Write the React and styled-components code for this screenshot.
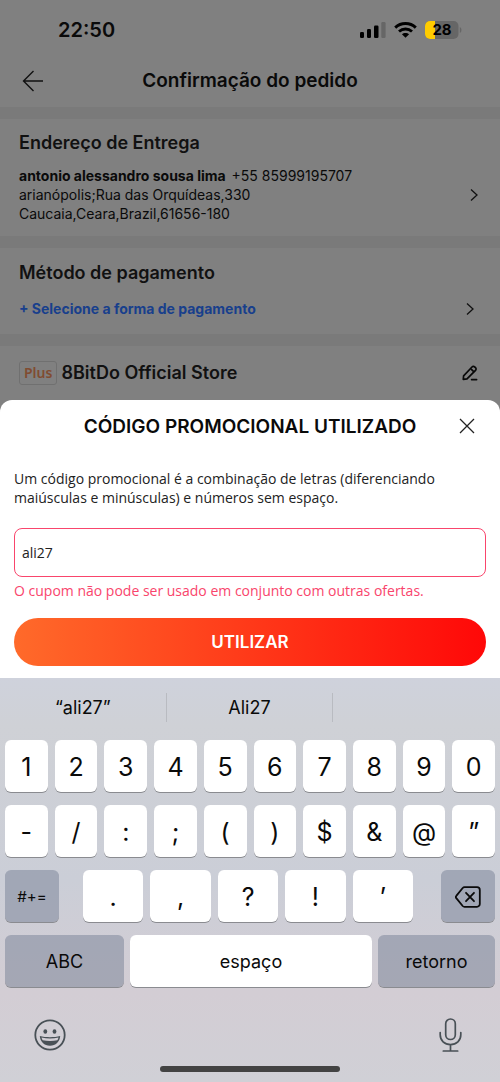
import React, { useState } from "react";
import styled, { createGlobalStyle } from "styled-components";

const GlobalStyle = createGlobalStyle`
    * {
        box-sizing: border-box;
    }
    body {
        margin: 0;
        background-color: #d0d0d6;
        font-family: Inter, "Liberation Sans", sans-serif;
        color: #0a0a0a;
    }
    button, input {
        font-family: inherit;
        color: inherit;
    }
    h1, h2, p {
        margin: 0;
    }
`
const Screen = styled.div`
    display: flex;
    flex-direction: column;
    min-height: 100vh;
`
const Page = styled.main`
    background-color: #7a7a7a;
    display: flex;
    flex-direction: column;
    gap: 12px;
`
const Header = styled.header`
    background-color: #808080;
    padding-bottom: 6px;
`
const StatusBar = styled.div`
    display: flex;
    align-items: center;
    justify-content: space-between;
    height: 60px;
    padding: 0 38px 0 58px;
`
const Time = styled.span`
    font-size: 20px;
    font-weight: 600;
`
const StatusIcons = styled.div`
    display: flex;
    align-items: center;
    gap: 8px;
`
const TitleBar = styled.div`
    display: grid;
    grid-template-columns: 24px 1fr 24px;
    align-items: center;
    height: 41px;
    padding: 0 21px;
`
const PageTitle = styled.h1`
    text-align: center;
    font-size: 19px;
    font-weight: 600;
`
const IconButton = styled.button`
    display: flex;
    align-items: center;
    justify-content: center;
    padding: 0;
    border: none;
    background: none;
`
const Section = styled.section`
    background-color: #808080;
    padding: ${props => props.$padding};
`
const SectionTitle = styled.h2`
    font-size: 18px;
    line-height: 24px;
    font-weight: 600;
    color: #111;
`
const RowButton = styled.button`
    display: flex;
    align-items: center;
    justify-content: space-between;
    width: 100%;
    padding: 0;
    border: none;
    background: none;
    text-align: left;
    font-size: 14px;
    line-height: 19px;
    margin-top: ${props => props.$top};
`
const PayText = styled.span`
    font-weight: 700;
    color: #183f8c;
`
const Name = styled.b`
    margin-right: 2px;
`
const StoreRow = styled.div`
    display: flex;
    align-items: center;
    gap: 4px;

    button {
        margin-left: auto;
    }
`
const PlusTag = styled.span`
    height: 24px;
    padding: 0 4px;
    border: 1px solid #707070;
    border-radius: 3px;
    font-family: "Noto Sans", sans-serif;
    font-size: 14px;
    line-height: 22px;
    font-weight: 600;
    color: #804c31;
`
const SheetWrap = styled.div`
    background-color: #808080;
`
const Sheet = styled.form`
    background-color: #fff;
    border-radius: 12px 12px 0 0;
    padding: 12px 14px;
`
const SheetHeader = styled.div`
    display: grid;
    grid-template-columns: 38px 1fr 38px;
    align-items: center;
    height: 28px;
`
const SheetTitle = styled.h2`
    text-align: center;
    font-size: 19px;
    font-weight: 600;
    white-space: nowrap;
`
const Help = styled.p`
    margin-top: 29px;
    font-family: "Open Sans", sans-serif;
    font-size: 14px;
    line-height: 19px;
    color: #222;
`
const CodeInput = styled.input`
    display: block;
    width: 100%;
    height: 49px;
    margin-top: 21px;
    padding: 0 7px;
    border: 1px solid #f9456c;
    border-radius: 8px;
    outline: none;
    background-color: #fff;
    font-family: "Open Sans", sans-serif;
    font-size: 14px;
    color: #222;
`
const ErrorText = styled.p`
    margin-top: 4px;
    font-family: "Open Sans", sans-serif;
    font-size: 14px;
    line-height: 20px;
    color: #f9456c;
`
const SubmitButton = styled.button`
    display: block;
    width: 100%;
    height: 48px;
    margin-top: 17px;
    border: none;
    border-radius: 24px;
    background-image: linear-gradient(to right, #ff6a2a, #ff0808);
    font-size: 17px;
    font-weight: 600;
    color: #fff;
`
const Keyboard = styled.div`
    flex: 1;
    background-image: linear-gradient(#cfd2dc, #cfd1d6 12%, #cbced7 50%, #d3cdd4 78%, #d0d0d6);
`
const Suggestions = styled.div`
    display: grid;
    grid-template-columns: repeat(3, 1fr);
    padding: 15px 0 18px;
`
const Suggestion = styled.button`
    height: 29px;
    padding: 0;
    border: none;
    border-right: ${props => props.$last ? "none" : "1px solid #b9bbc1"};
    background: none;
    font-size: 18px;
`
const Keys = styled.div`
    display: flex;
    flex-direction: column;
    gap: 13px;
    padding: 0 5px;
`
const KeyRow = styled.div`
    display: flex;
    gap: ${props => props.$gap || "7px"};
    flex: 1;
    margin: ${props => props.$margin || "0"};
`
const SplitRow = styled.div`
    display: flex;
`
const Key = styled.button`
    display: flex;
    align-items: center;
    justify-content: center;
    flex: ${props => props.$flex || "1 1 0"};
    min-width: 0;
    height: 52px;
    padding: 1px 0 0;
    border: none;
    border-radius: 6px;
    box-shadow: 0 1px 0 #8a8b90;
    background-color: ${props => props.$dark ? "rgba(115, 125, 147, 0.48)" : "#fff"};
    font-size: ${props => props.$size || "25px"};
`
const BottomBar = styled.div`
    display: flex;
    align-items: center;
    justify-content: space-between;
    padding: 31px 33px 0;
`
const HomeIndicator = styled.div`
    width: 36%;
    height: 6px;
    margin: 14px auto 9px;
    border-radius: 3px;
    background-color: #434343;
`

const SignalIcon = () => (
    <svg width="26" height="16" viewBox="0 0 26 16">
        <rect x="0" y="10" width="4" height="6" rx="1.2" fill="#000" />
        <rect x="7" y="7" width="4" height="9" rx="1.2" fill="#000" />
        <rect x="14" y="3.5" width="4.5" height="12.5" rx="1.2" fill="#000" />
        <rect x="21.3" y="0" width="4.3" height="16" rx="1.2" fill="#666" />
    </svg>
)

const WifiIcon = () => (
    <svg width="23" height="16" viewBox="0 0 23 16" fill="none" stroke="#000" strokeWidth="2.9">
        <path d="M1.2 5.6C7 .2 16 .2 21.8 5.6" />
        <path d="M5 9.5c3.8-3.4 9.2-3.4 13 0" />
        <path d="M11.5 15.8 7.9 12.3c2-1.8 5.2-1.8 7.2 0z" fill="#000" stroke="none" />
    </svg>
)

const BatteryIcon = () => (
    <svg width="37" height="18" viewBox="0 0 37 18">
        <rect width="33.5" height="18" rx="5" fill="#666" />
        <path d="M5 0h5v18H5a5 5 0 0 1-5-5V5a5 5 0 0 1 5-5z" fill="#fc0" />
        <path d="M34.8 6c2.2 1 2.2 5 0 6z" fill="#666" />
        <text x="17" y="14.2" textAnchor="middle" fontSize="15" fontWeight="700" fill="#000">28</text>
    </svg>
)

const BackIcon = () => (
    <svg width="22" height="22" viewBox="0 0 22 22" fill="none" stroke="#111" strokeWidth="1.4">
        <path d="M11.5 1 1.5 11l10 10M1.5 11H21" />
    </svg>
)

const ChevronIcon = () => (
    <svg width="10" height="14" viewBox="0 0 10 14" fill="none" stroke="#111" strokeWidth="1.3">
        <path d="m2 1.5 6 5.5-6 5.5" />
    </svg>
)

const PencilIcon = () => (
    <svg width="16" height="16" viewBox="0 0 16 16" fill="none" stroke="#080808" strokeWidth="1.7" strokeLinejoin="round" strokeLinecap="round">
        <path d="M1.3 14.3 1.6 10.8 10 2a1.9 1.9 0 0 1 2.7 0l.8.7a1.9 1.9 0 0 1 0 2.7L5 13.8z" />
        <path d="m9.4 4.3 1.8 1.8M9.6 14.6H14.6" />
    </svg>
)

const CloseIcon = () => (
    <svg width="16" height="16" viewBox="0 0 16 16" fill="none" stroke="#222" strokeWidth="1.3">
        <path d="m1 1 14 14M15 1 1 15" />
    </svg>
)

const DeleteIcon = () => (
    <svg width="26" height="22" viewBox="0 0 26 22" fill="none" stroke="#0a0a0a" strokeWidth="1.8" strokeLinecap="round" strokeLinejoin="round">
        <path d="M9.5 1.2H22a2.8 2.8 0 0 1 2.8 2.8v14a2.8 2.8 0 0 1-2.8 2.8H9.5a2.5 2.5 0 0 1-1.8-.8L1.5 12.4a2 2 0 0 1 0-2.8L7.7 2a2.5 2.5 0 0 1 1.8-.8z" />
        <path d="m11 6.8 8 8.4M19 6.8l-8 8.4" />
    </svg>
)

const EmojiIcon = () => (
    <svg width="34" height="34" viewBox="0 0 34 34">
        <circle cx="17" cy="17" r="14.7" fill="none" stroke="#485056" strokeWidth="1.8" />
        <ellipse cx="12.3" cy="13.5" rx="1.9" ry="2.2" fill="#485056" />
        <ellipse cx="21.5" cy="13.5" rx="1.9" ry="2.2" fill="#485056" />
        <path d="M6.8 18c6 1.6 14.4 1.6 20.4 0-.4 5.8-4.5 9.7-10.2 9.7S7.2 23.800 6.800 18z" fill="#485056" />
        <path d="M8.500 19.500c5.300 1.200 11.700 1.200 17 0-.2 1.100-.6 2-1.200 2.700-4.600 1.100-10 1.100-14.600 0-.6-.7-1-1.600-1.200-2.700z" fill="#d2ced5" />
    </svg>
)

const MicIcon = () => (
    <svg width="34" height="34" viewBox="0 0 34 34" fill="none" stroke="#485056" strokeWidth="1.7" strokeLinecap="round">
        <rect x="12.7" y="1" width="9.6" height="20.5" rx="4.8" />
        <path d="M7.2 14.5v2.3c0 5.800 4.300 9.800 10.300 9.800s10.300-4 10.300-9.800v-2.300M17.500 26.600V33M10.300 33h14.400" />
    </svg>
)

const App = () => {
    const [code, setCode] = useState("ali27")
    const type = (char) => setCode(code + char)

    return (
        <>
            <GlobalStyle />
            <Screen>
                <Page>
                    <Header>
                        <StatusBar>
                            <Time>22:50</Time>
                            <StatusIcons>
                                <SignalIcon />
                                <WifiIcon />
                                <BatteryIcon />
                            </StatusIcons>
                        </StatusBar>
                        <TitleBar>
                            <IconButton aria-label="Voltar"><BackIcon /></IconButton>
                            <PageTitle>Confirmação do pedido</PageTitle>
                        </TitleBar>
                    </Header>
                    <Section $padding="12px 21px 13px 19px">
                        <SectionTitle>Endereço de Entrega</SectionTitle>
                        <RowButton $top="11px">
                            <span>
                                <Name>antonio alessandro sousa lima</Name> +55 85999195707<br />
                                arianópolis;Rua das Orquídeas,330<br />
                                Caucaia,Ceara,Brazil,61656-180
                            </span>
                            <ChevronIcon />
                        </RowButton>
                    </Section>
                    <Section $padding="13px 25px 16px 19px">
                        <SectionTitle>Método de pagamento</SectionTitle>
                        <RowButton $top="14px">
                            <PayText>+ Selecione a forma de pagamento</PayText>
                            <ChevronIcon />
                        </RowButton>
                    </Section>
                    <Section $padding="15px 22px 15px 19px">
                        <StoreRow>
                            <PlusTag>Plus</PlusTag>
                            <SectionTitle>8BitDo Official Store</SectionTitle>
                            <IconButton aria-label="Editar"><PencilIcon /></IconButton>
                        </StoreRow>
                    </Section>
                </Page>
                <SheetWrap>
                    <Sheet onSubmit={(e) => e.preventDefault()}>
                        <SheetHeader>
                            <span />
                            <SheetTitle id="code-title">CÓDIGO PROMOCIONAL UTILIZADO</SheetTitle>
                            <IconButton type="button" aria-label="Fechar"><CloseIcon /></IconButton>
                        </SheetHeader>
                        <Help>
                            Um código promocional é a combinação de letras (diferenciando maiúsculas e minúsculas) e números sem espaço.
                        </Help>
                        <CodeInput
                            type="text"
                            aria-labelledby="code-title"
                            aria-describedby="code-error"
                            value={code}
                            onChange={(e) => setCode(e.target.value)}
                        />
                        <ErrorText id="code-error">O cupom não pode ser usado em conjunto com outras ofertas.</ErrorText>
                        <SubmitButton type="submit">UTILIZAR</SubmitButton>
                    </Sheet>
                </SheetWrap>
                <Keyboard>
                    <Suggestions>
                        <Suggestion>“ali27”</Suggestion>
                        <Suggestion>Ali27</Suggestion>
                        <Suggestion $last aria-label="Sugestão" />
                    </Suggestions>
                    <Keys>
                        <KeyRow>
                            {[..."1234567890"].map(k => <Key key={k} onClick={() => type(k)}>{k}</Key>)}
                        </KeyRow>
                        <KeyRow>
                            {[..."-/:;()$&@”"].map(k => <Key key={k} onClick={() => type(k)}>{k}</Key>)}
                        </KeyRow>
                        <SplitRow>
                            <Key $dark $flex="0 0 54px" $size="15px">#+=</Key>
                            <KeyRow $margin="0 28px 0 24px">
                                {[...".,?!’"].map(k => <Key key={k} onClick={() => type(k)}>{k}</Key>)}
                            </KeyRow>
                            <Key $dark $flex="0 0 54px" aria-label="Apagar" onClick={() => setCode(code.slice(0, -1))}>
                                <DeleteIcon />
                            </Key>
                        </SplitRow>
                        <KeyRow $gap="6px">
                            <Key $dark $flex="119 1 0" $size="18px">ABC</Key>
                            <Key $flex="242 1 0" $size="18px" onClick={() => type(" ")}>espaço</Key>
                            <Key $dark $flex="117 1 0" $size="18px">retorno</Key>
                        </KeyRow>
                    </Keys>
                    <BottomBar>
                        <IconButton aria-label="Emoji"><EmojiIcon /></IconButton>
                        <IconButton aria-label="Ditado"><MicIcon /></IconButton>
                    </BottomBar>
                    <HomeIndicator />
                </Keyboard>
            </Screen>
        </>
    )
}

export default App;
